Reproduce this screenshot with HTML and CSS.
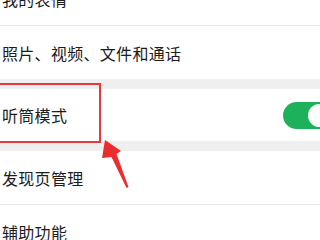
FILE: index.html
```html
<!DOCTYPE html>
<html lang="zh">
<head>
<meta charset="utf-8">
<link rel="stylesheet" href="styles.css">
</head>
<body>
<div class="screen">
  <div class="list">
    <div class="row">我的表情</div>
    <div class="sep"></div>
    <div class="row">照片、视频、文件和通话</div>
    <div class="gap"></div>
    <div class="row row-toggle">
      <span>听筒模式</span>
      <span class="toggle"><span class="knob"></span></span>
    </div>
    <div class="gap"></div>
    <div class="row">发现页管理</div>
    <div class="sep"></div>
    <div class="row">辅助功能</div>
  </div>
  <div class="highlight"></div>
  <svg class="arrow" width="40" height="60" viewBox="0 0 40 60">
    <polygon points="5,0 21,11 16.5,14 28.5,47 26.5,48 11.5,17 2,18" fill="#ec2d2d"/>
  </svg>
</div>
</body>
</html>
```
FILE: styles.css
```css
html, body {
  margin: 0;
  padding: 0;
  background: #ffffff;
}
.screen {
  position: relative;
  width: 320px;
  height: 240px;
  overflow: hidden;
  font-family: "Noto Sans CJK SC", "Noto Sans", sans-serif;
  color: #1c1c1c;
}
.list {
  margin-top: -28px;
  display: flex;
  flex-direction: column;
}
.row {
  height: 53px;
  display: flex;
  align-items: center;
  padding-left: 2px;
  font-size: 16px;
  letter-spacing: 0.3px;
  background: #ffffff;
}
.row-toggle {
  height: 52px;
  justify-content: space-between;
}
.sep {
  height: 1px;
  background: #e6e6e6;
}
.gap {
  height: 10px;
  background: #efefef;
}
.toggle {
  position: relative;
  width: 50px;
  height: 27px;
  border-radius: 14px;
  background: #1db25a;
  margin-right: -13px;
}
.knob {
  position: absolute;
  top: 2px;
  right: 2px;
  width: 23px;
  height: 23px;
  border-radius: 50%;
  background: #ffffff;
}
.highlight {
  position: absolute;
  left: -4px;
  top: 83px;
  width: 101px;
  height: 56px;
  border: 2px solid #e8383d;
}
.arrow {
  position: absolute;
  left: 100px;
  top: 140px;
}
```
